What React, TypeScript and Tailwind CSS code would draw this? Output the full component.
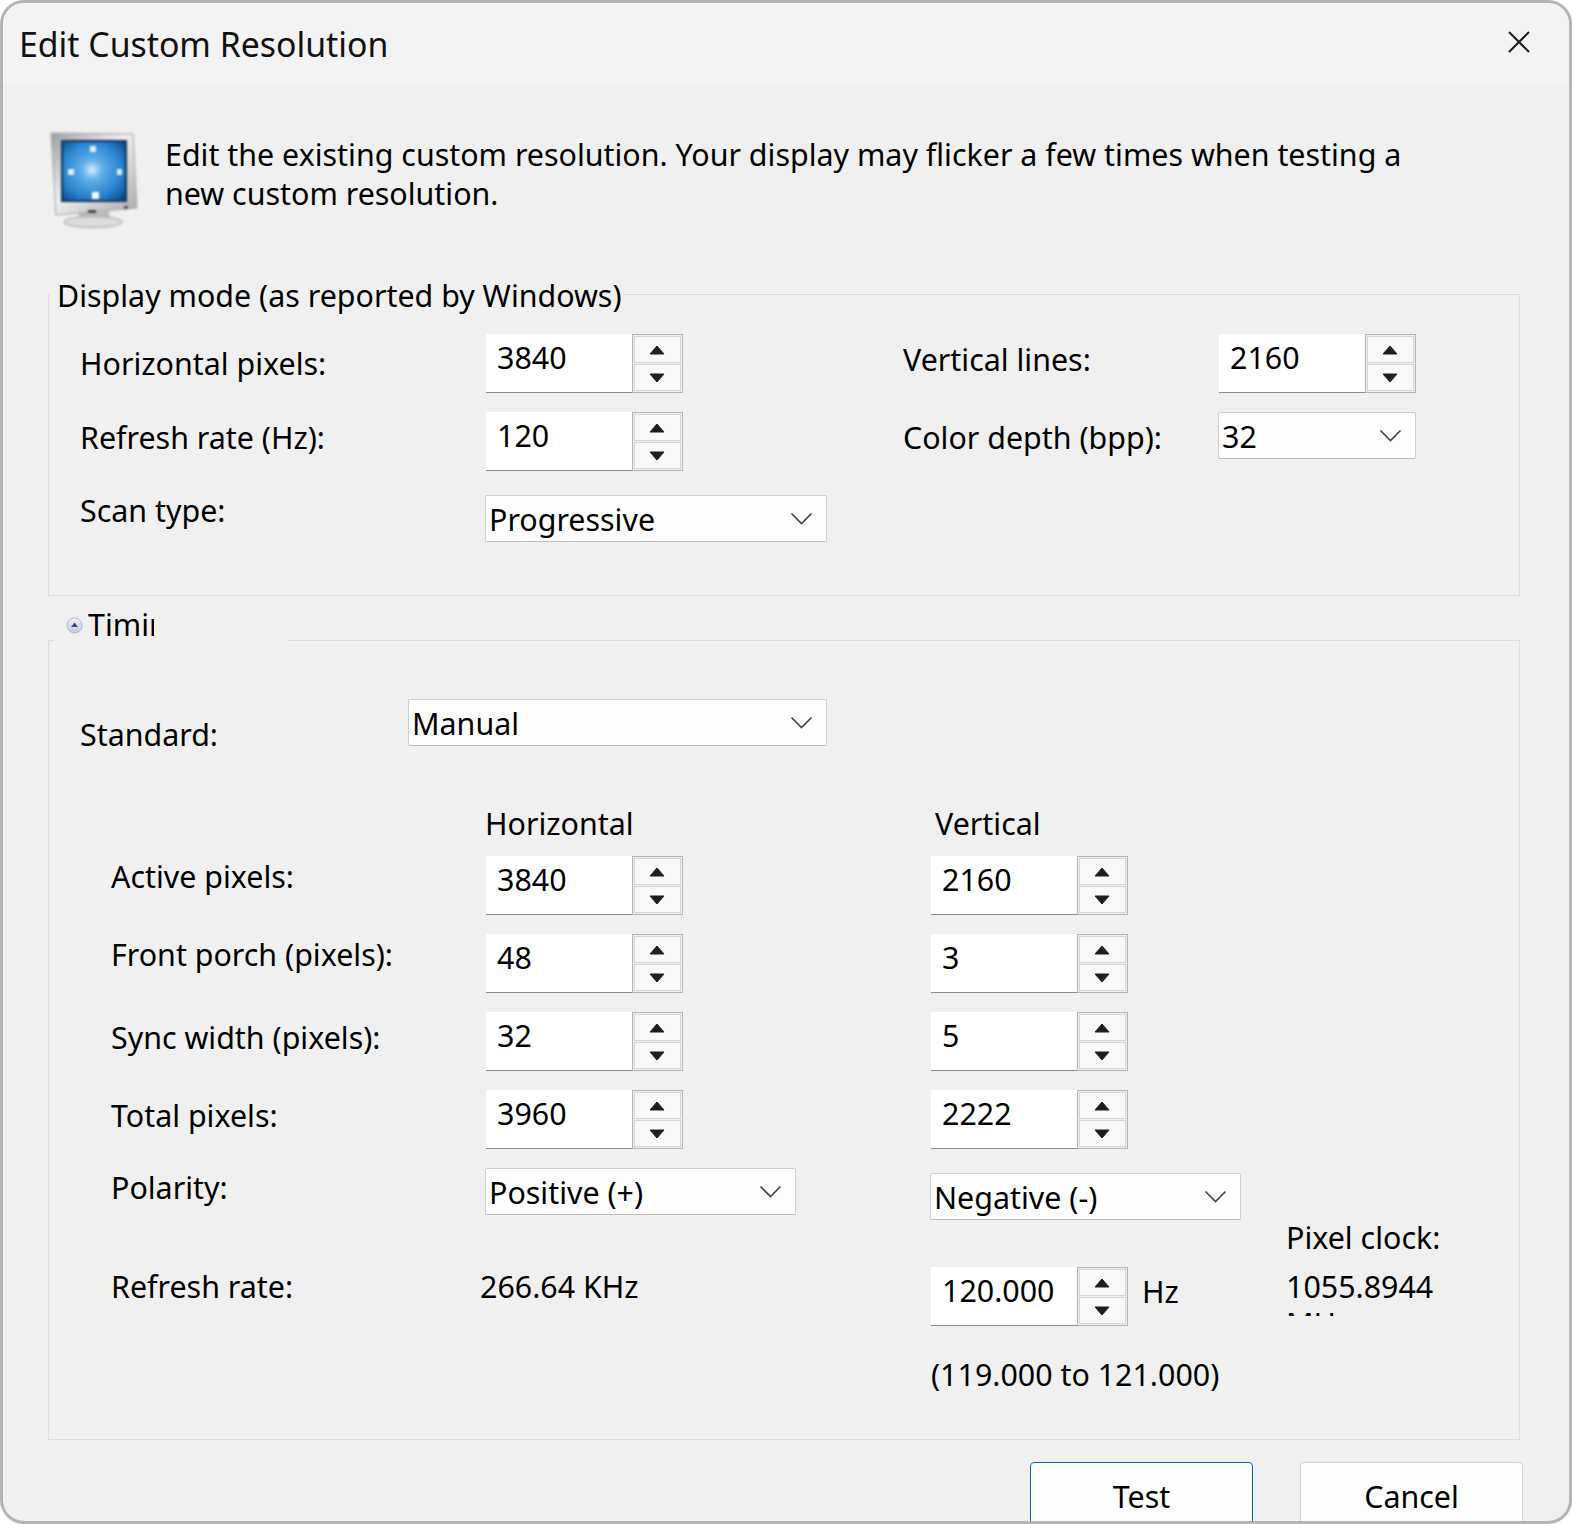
function Chevron() {
  return (
    <svg width="23" height="13" viewBox="0 0 23 13" fill="none" className="shrink-0">
      <path d="M1.5 1.5 L11.5 11.5 L21.5 1.5" stroke="#444" strokeWidth="1.6" />
    </svg>
  );
}

function Spinner({ value }: { value: string }) {
  return (
    <div className="flex h-[59px] w-[197px] shrink-0">
      <div className="w-[146px] h-full bg-white border-b border-[#8c8c8c] pl-[11px] text-[30.4px] leading-[47px] text-black">
        {value}
      </div>
      <div className="flex-1 flex flex-col gap-[1px] border border-[#b4b4b4] p-[1px] bg-[#f0f0f0]">
        <div className="flex-1 flex items-center justify-center bg-[#f9f9f9] border border-[#d4d4d4]">
          <svg width="16" height="10" viewBox="0 0 16 10" className="-ml-[2px]"><path d="M8 1 L15 9 H1 Z" fill="#1e1e1e" stroke="#1e1e1e" strokeLinejoin="round" /></svg>
        </div>
        <div className="flex-1 flex items-center justify-center bg-[#f9f9f9] border border-[#d4d4d4]">
          <svg width="16" height="10" viewBox="0 0 16 10" className="-ml-[2px]"><path d="M1 1 H15 L8 9 Z" fill="#1e1e1e" stroke="#1e1e1e" strokeLinejoin="round" /></svg>
        </div>
      </div>
    </div>
  );
}

function Combo({ value, width }: { value: string; width: string }) {
  return (
    <div className={`${width} h-[47px] shrink-0 flex items-center justify-between pl-[3px] pr-[13px] bg-[#fdfdfd] border border-[#cdcdcd] border-b-[#bdbdbd] rounded-[2px] text-[30.4px] text-black`}>
      <span className="pt-[2px]">{value}</span>
      <Chevron />
    </div>
  );
}

function Label({ children, className = '' }: { children: React.ReactNode; className?: string }) {
  return <div className={`text-[30.4px] leading-[40px] text-black whitespace-nowrap ${className}`}>{children}</div>;
}

function TimingRow({ label, pt, h, v }: { label: string; pt: string; h: string; v: string }) {
  return (
    <div className="flex">
      <Label className={`w-[375px] ${pt}`}>{label}</Label>
      <Spinner value={h} />
      <div className="w-[248px]" />
      <Spinner value={v} />
    </div>
  );
}

function MonitorIcon() {
  return (
    <svg width="92" height="98" viewBox="0 0 92 98" className="blur-[0.9px] shrink-0 -mt-[3px]">
      <defs>
        <linearGradient id="frame" x1="0" y1="0" x2="1" y2="1">
          <stop offset="0" stopColor="#9e9e9e" />
          <stop offset="0.45" stopColor="#efefef" />
          <stop offset="1" stopColor="#a8a8a8" />
        </linearGradient>
        <radialGradient id="screen" cx="0.47" cy="0.48" r="0.72">
          <stop offset="0" stopColor="#d7ecfb" />
          <stop offset="0.22" stopColor="#62b2ea" />
          <stop offset="0.65" stopColor="#2680cb" />
          <stop offset="1" stopColor="#0d3f78" />
        </radialGradient>
      </defs>
      <path d="M30 78 H60 L64 90 H32 Z" fill="#bdbdbd" />
      <ellipse cx="45" cy="90" rx="29" ry="5.5" fill="#dcdcdc" stroke="#a0a0a0" />
      <path d="M3 1 L85 2 L89 76 L8 83 Z" fill="url(#frame)" stroke="#a8a8a8" />
      <rect x="14" y="9" width="64" height="60" fill="url(#screen)" stroke="#103660" strokeWidth="2" />
      <rect x="42" y="14" width="6" height="6" fill="#e8eef6" />
      <rect x="20" y="37" width="6" height="6" fill="#e8eef6" />
      <rect x="69" y="37" width="5" height="6" fill="#e8eef6" />
      <rect x="44" y="60" width="7" height="7" fill="#ffffff" />
      <rect x="76" y="74" width="4" height="3" fill="#555555" />
      <rect x="40" y="78" width="8" height="3" fill="#444444" />
    </svg>
  );
}

function CollapseIcon() {
  return (
    <svg width="17" height="17" viewBox="0 0 17 17" className="shrink-0">
      <defs>
        <linearGradient id="ball" x1="0" y1="0" x2="0" y2="1">
          <stop offset="0" stopColor="#f4f4f4" />
          <stop offset="1" stopColor="#c4cbcb" />
        </linearGradient>
      </defs>
      <circle cx="8.5" cy="8.5" r="7.5" fill="url(#ball)" stroke="#a9b4d6" />
      <path d="M8.5 5.5 L12 10 H5 Z" fill="#2f4a94" />
    </svg>
  );
}

export default function App() {
  return (
    <div className="w-[1572px] h-[1524px] bg-white overflow-hidden" style={{ fontFamily: '"Noto Sans", sans-serif' }}>
      <div className="h-full border-[3px] border-[#b4b4b4] rounded-[24px] overflow-hidden bg-[#f0f0f0] flex flex-col">
        {/* title bar */}
        <div className="h-[81px] shrink-0 bg-[#f3f3f3] flex items-center justify-between pl-[16px] pr-[39px]">
          <span className="text-[33.8px] text-[#111] pt-[2px]">Edit Custom Resolution</span>
          <svg width="22" height="22" viewBox="0 0 22 22" className="-mt-[3px]">
            <path d="M1 1 L21 21 M21 1 L1 21" stroke="#1a1a1a" strokeWidth="2" />
          </svg>
        </div>

        {/* intro */}
        <div className="flex pl-[45px] pt-[51px] gap-[25px]">
          <MonitorIcon />
          <div className="text-[30.4px] leading-[39px] text-black">
            Edit the existing custom resolution. Your display may flicker a few times when testing a
            <br />
            new custom resolution.
          </div>
        </div>

        {/* display mode */}
        <div className="relative ml-[45px] mr-[49px] mt-[64px] border border-[#dcdcdc] pl-[31px] pt-[39px] pb-[53px]">
          <div className="absolute left-[1px] -top-[19px] bg-[#f0f0f0] pl-[7px] pr-[2px]">
            <Label>Display mode (as reported by Windows)</Label>
          </div>
          <div className="flex">
            <Label className="w-[406px] pt-[10px]">Horizontal pixels:</Label>
            <Spinner value="3840" />
            <Label className="w-[316px] ml-[220px] pt-[6px]">Vertical lines:</Label>
            <Spinner value="2160" />
          </div>
          <div className="flex mt-[19px]">
            <Label className="w-[406px] pt-[6px]">Refresh rate (Hz):</Label>
            <Spinner value="120" />
            <Label className="w-[315px] ml-[220px] pt-[6px]">Color depth (bpp):</Label>
            <Combo value="32" width="w-[198px]" />
          </div>
          <div className="flex mt-[20px]">
            <Label className="w-[405px]">Scan type:</Label>
            <div className="mt-[4px]">
              <Combo value="Progressive" width="w-[342px]" />
            </div>
          </div>
        </div>

        {/* timing */}
        <div className="relative ml-[45px] mr-[49px] mt-[44px] border border-[#dcdcdc] pl-[31px] pt-[58px] pb-[44px]">
          <div className="absolute left-[6px] -top-[36px] w-[233px] h-[40px] bg-[#f0f0f0] flex items-center pl-[11px] gap-[5px]">
            <CollapseIcon />
            <div className="w-[66px] overflow-hidden text-[30.4px] leading-[40px] text-black whitespace-nowrap">Timing</div>
          </div>

          <div className="flex">
            <Label className="w-[328px] pt-[16px]">Standard:</Label>
            <Combo value="Manual" width="w-[419px]" />
          </div>

          <div className="flex mt-[49px] pl-[405px]">
            <Label className="w-[450px]">Horizontal</Label>
            <Label>Vertical</Label>
          </div>

          <div className="mt-[12px] pl-[31px] flex flex-col gap-[19px]">
            <TimingRow label="Active pixels:" pt="pt-[1px]" h="3840" v="2160" />
            <TimingRow label="Front porch (pixels):" pt="pt-[1px]" h="48" v="3" />
            <TimingRow label="Sync width (pixels):" pt="pt-[6px]" h="32" v="5" />
            <TimingRow label="Total pixels:" pt="pt-[6px]" h="3960" v="2222" />
          </div>

          <div className="flex mt-[19px] pl-[31px]">
            <div className="w-[1175px] shrink-0">
              <div className="flex">
                <Label className="w-[374px]">Polarity:</Label>
                <Combo value="Positive (+)" width="w-[311px]" />
                <div className="ml-[134px] mt-[5px]">
                  <Combo value="Negative (-)" width="w-[311px]" />
                </div>
              </div>
              <div className="flex mt-[47px]">
                <Label className="w-[369px]">Refresh rate:</Label>
                <Label className="w-[451px]">266.64 KHz</Label>
                <Spinner value="120.000" />
                <Label className="ml-[14px] pt-[5px]">Hz</Label>
              </div>
              <Label className="mt-[29px] ml-[820px]">(119.000 to 121.000)</Label>
            </div>
            <div className="h-[98px] overflow-hidden mt-[50px] w-[170px] text-[30.4px] leading-[40px] text-black whitespace-nowrap">
              <div className="mb-[11px]">Pixel clock:</div>
              <div className="leading-[35px]">1055.8944</div>
              <div>MHz</div>
            </div>
          </div>
        </div>

        {/* buttons */}
        <div className="flex justify-end gap-[47px] pr-[46px] mt-[22px]">
          <div className="w-[223px] h-[70px] shrink-0 bg-[#fdfdfd] border border-[#0067c0] rounded-[4px] flex items-center justify-center text-[30.4px] text-black">Test</div>
          <div className="w-[223px] h-[70px] shrink-0 bg-[#fdfdfd] border border-[#cfcfcf] rounded-[4px] flex items-center justify-center text-[30.4px] text-black">Cancel</div>
        </div>
      </div>
    </div>
  );
}
